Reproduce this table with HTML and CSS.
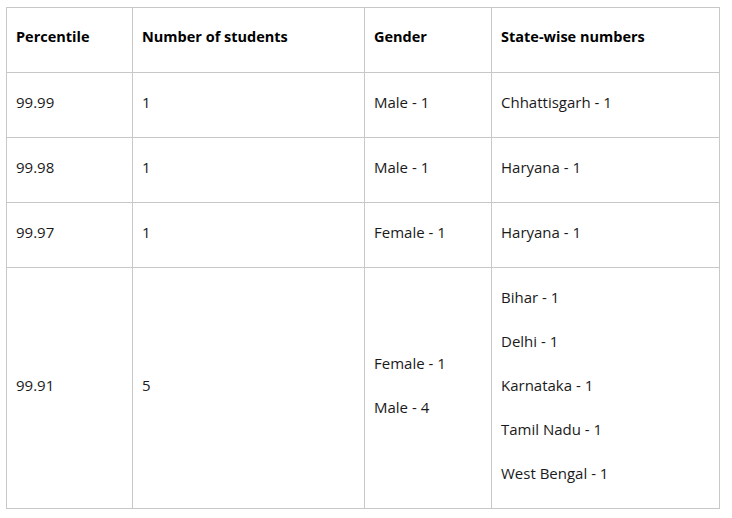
FILE: index.html
```html
<!DOCTYPE html>
<html>
<head>
<meta charset="utf-8">
<link rel="stylesheet" href="styles.css">
</head>
<body>
<table class="data">
  <colgroup>
    <col class="c1"><col class="c2"><col class="c3"><col class="c4">
  </colgroup>
  <thead>
    <tr>
      <th>Percentile</th>
      <th>Number of students</th>
      <th>Gender</th>
      <th>State-wise numbers</th>
    </tr>
  </thead>
  <tbody>
    <tr>
      <td>99.99</td>
      <td>1</td>
      <td>Male - 1</td>
      <td>Chhattisgarh - 1</td>
    </tr>
    <tr>
      <td>99.98</td>
      <td>1</td>
      <td>Male - 1</td>
      <td>Haryana - 1</td>
    </tr>
    <tr>
      <td>99.97</td>
      <td>1</td>
      <td>Female - 1</td>
      <td>Haryana - 1</td>
    </tr>
    <tr>
      <td>99.91</td>
      <td>5</td>
      <td>
        <p>Female - 1</p>
        <p>Male - 4</p>
      </td>
      <td>
        <p>Bihar - 1</p>
        <p>Delhi - 1</p>
        <p>Karnataka - 1</p>
        <p>Tamil Nadu - 1</p>
        <p>West Bengal - 1</p>
      </td>
    </tr>
  </tbody>
</table>
</body>
</html>
```
FILE: styles.css
```css
html, body {
  background: #ffffff;
}
body {
  margin: 7px 0 0 6px;
  font-family: "Open Sans", "Noto Sans", sans-serif;
  font-size: 15px;
  line-height: 20px;
  color: #1a1a1a;
}
.data {
  border-collapse: collapse;
  table-layout: fixed;
  width: 714px;
}
.c1 { width: 126px; }
.c2 { width: 232px; }
.c3 { width: 127px; }
.c4 { width: 228px; }
.data th,
.data td {
  border: 1px solid #c8c8c8;
  padding: 19px 9px 25px 9px;
  text-align: left;
  vertical-align: middle;
}
.data th {
  font-size: 14.5px;
  font-weight: 700;
  color: #000000;
}
.data p {
  margin: 0 0 24px 0;
}
.data p:last-child {
  margin-bottom: 0;
}
```
